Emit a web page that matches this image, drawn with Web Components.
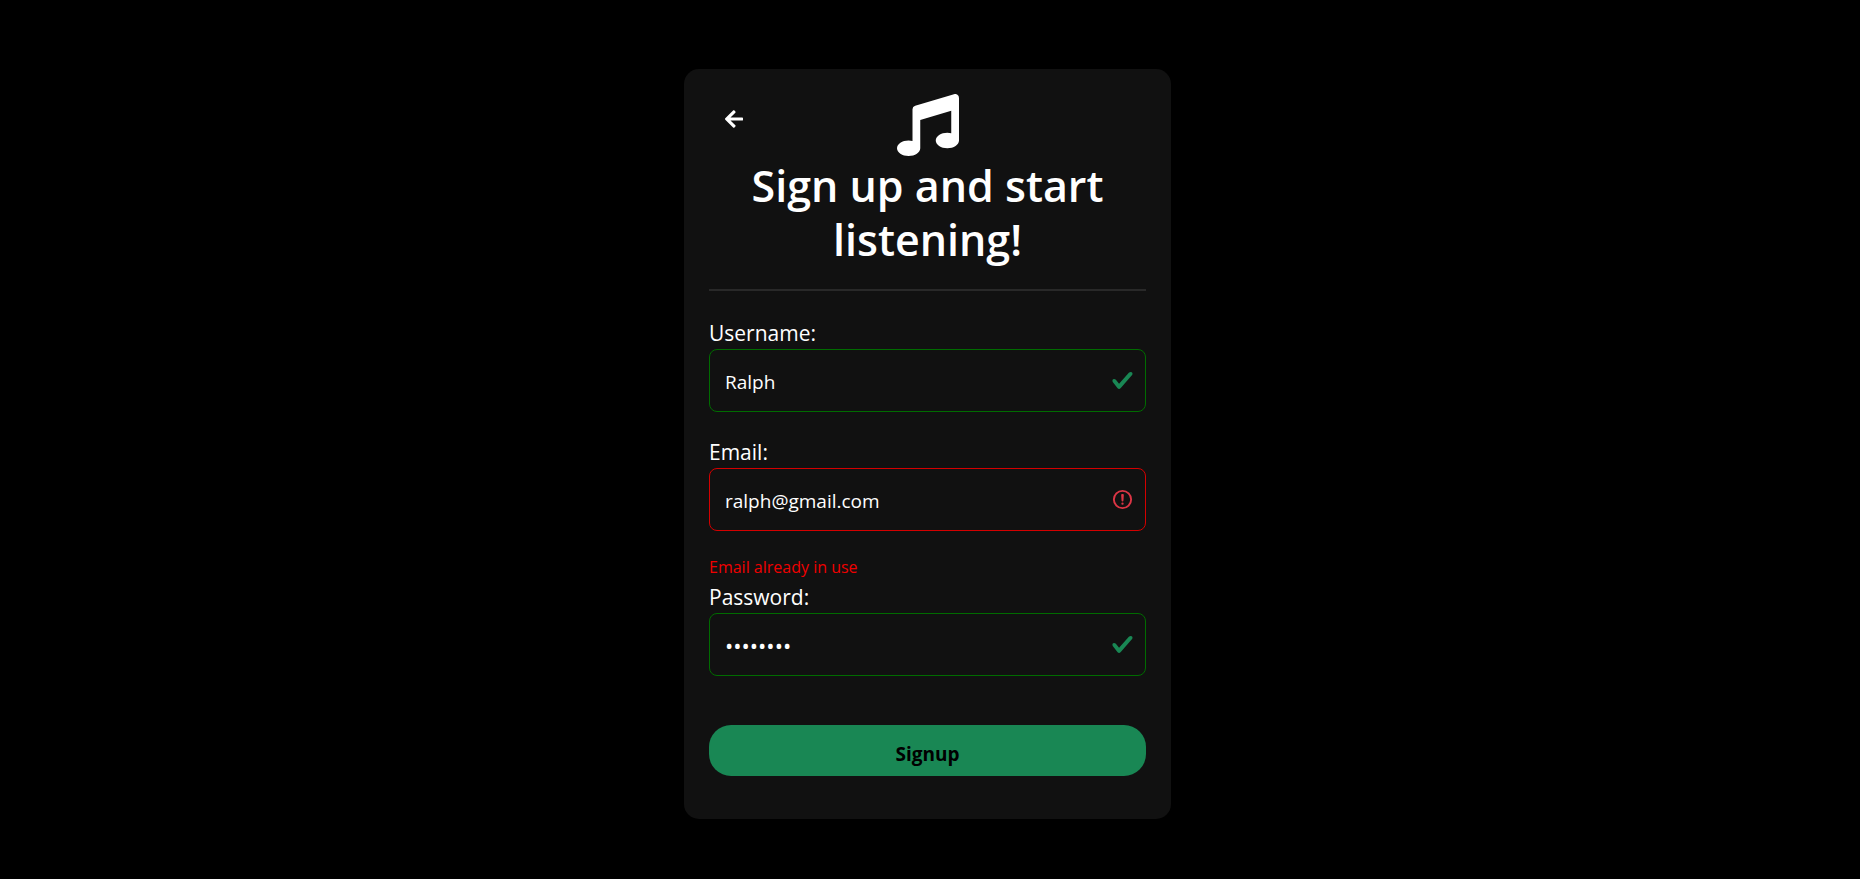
<!DOCTYPE html>
<html lang="en">
<head>
<meta charset="utf-8">
<meta name="viewport" content="width=device-width, initial-scale=1">
<title>Sign up</title>
<style>
  body { margin: 0; background: #000; color: #fff; font-family: "Open Sans", "Noto Sans", sans-serif; }
</style>
</head>
<body>
<signup-page></signup-page>

<script>
const ICONS = {
  valid: '<svg viewBox="0 0 8 8" aria-hidden="true"><path fill="#198754" d="M2.3 6.73.6 4.53c-.4-1.04.46-1.4 1.1-.8l1.1 1.4 3.4-3.8c.6-.63 1.6-.27 1.2.7l-4 4.6c-.43.5-.8.4-1.1.1z"/></svg>',
  invalid: '<svg viewBox="0 0 12 12" fill="none" stroke="#dc3545" aria-hidden="true"><circle cx="6" cy="6" r="4.5"/><path stroke-linejoin="round" d="M5.8 3.6h.4L6 6.5z"/><circle cx="6" cy="8.2" r=".6" fill="#dc3545" stroke="none"/></svg>'
};

class FormHeader extends HTMLElement {
  connectedCallback() {
    this.attachShadow({ mode: 'open' }).innerHTML = `
      <style>
        :host { display: block; border-bottom: 2px solid #292929; padding-bottom: 22px; }
        .top { display: grid; grid-template-columns: 1fr auto 1fr; align-items: start; }
        button { justify-self: start; display: flex; margin: 0; padding: 16px; border: 0; background: none; color: inherit; cursor: pointer; }
        svg { display: block; fill: #fff; }
        .arrow { width: 18px; height: 18px; }
        .note { width: 62px; height: 62px; }
        h1 { margin: 3px 0 0; font-size: 43px; font-weight: 600; line-height: 54px; text-align: center; }
      </style>
      <div class="top">
        <button type="button" aria-label="Back">
          <svg class="arrow" viewBox="0 32 448 448" aria-hidden="true"><path d="M257.5 445.1l-22.2 22.2c-9.4 9.4-24.6 9.4-33.9 0L7 273c-9.4-9.4-9.4-24.6 0-33.9L201.4 44.7c9.4-9.4 24.6-9.4 33.9 0l22.2 22.2c9.5 9.5 9.3 25-.4 34.3L136.6 216H424c13.3 0 24 10.7 24 24v32c0 13.3-10.7 24-24 24H136.6l120.5 114.8c9.8 9.3 10 24.8.4 34.3z"/></svg>
        </button>
        <svg class="note" viewBox="0 0 512 512" aria-hidden="true"><path d="M470.38 1.51L150.41 96A32 32 0 0 0 128 126.51v261.41A139 139 0 0 0 96 384c-53 0-96 28.66-96 64s43 64 96 64 96-28.66 96-64V214.32l256-75v184.61a138.4 138.4 0 0 0-32-3.93c-53 0-96 28.66-96 64s43 64 96 64 96-28.65 96-64V32a32 32 0 0 0-41.62-30.49z"/></svg>
      </div>
      <h1><slot></slot></h1>`;
  }
}

class FormField extends HTMLElement {
  connectedCallback() {
    const { label, type, value, state, error } = this.dataset;
    const bad = state === 'invalid';
    this.attachShadow({ mode: 'open' }).innerHTML = `
      <style>
        :host { display: block; }
        label { display: block; padding-bottom: 2px; font-size: 21px; line-height: 28px; }
        .box { display: grid; align-items: center; }
        input, .box svg { grid-area: 1 / 1; }
        input { box-sizing: border-box; width: 100%; height: 63px; margin: 0; padding: 2px 48px 0 15px;
          border: 1px solid ${bad ? '#d40000' : '#006c00'}; border-radius: 8px; outline: 0;
          background: #111; color: #fff; font: 19px "Open Sans", "Noto Sans", sans-serif; }
        input[type="password"] { padding-top: 0; font-size: 22px; }
        .box svg { justify-self: end; width: 23px; height: 23px; margin-right: 12px; pointer-events: none; }
        p { margin: 22px 0 2px; color: #f00000; font-size: 16px; line-height: 28px; }
      </style>
      <label for="field">${label}</label>
      <div class="box"><input id="field" type="${type}" value="${value}" ${bad ? 'aria-invalid="true" aria-describedby="error"' : ''}>${ICONS[state]}</div>
      ${error ? `<p id="error">${error}</p>` : ''}`;
  }
}

class SubmitButton extends HTMLElement {
  connectedCallback() {
    this.attachShadow({ mode: 'open' }).innerHTML = `
      <style>
        :host { display: block; }
        button { display: block; width: 100%; margin: 0; padding: 15px 0 8px; border: 0; border-radius: 22px;
          background: #198754; color: #000; font: 700 19px/28px "Open Sans", "Noto Sans", sans-serif; cursor: pointer; }
      </style>
      <button type="submit"><slot></slot></button>`;
  }
}

class SignupPage extends HTMLElement {
  connectedCallback() {
    this.attachShadow({ mode: 'open' }).innerHTML = `
      <style>
        :host { display: flex; justify-content: center; padding: 69px 5px 60px 0; }
        main { box-sizing: border-box; width: 100%; max-width: 487px; padding: 25px 25px 43px; border-radius: 15px; background: #111; }
        form { margin: 28px 0 0; }
        .spaced { margin-top: 26px; }
        submit-button { margin-top: 49px; }
      </style>
      <main>
        <form-header>Sign up and start listening!</form-header>
        <form>
          <form-field data-label="Username:" data-type="text" data-value="Ralph" data-state="valid"></form-field>
          <form-field class="spaced" data-label="Email:" data-type="email" data-value="ralph@gmail.com" data-state="invalid" data-error="Email already in use"></form-field>
          <form-field data-label="Password:" data-type="password" data-value="password" data-state="valid"></form-field>
          <submit-button>Signup</submit-button>
        </form>
      </main>`;
  }
}

customElements.define('form-header', FormHeader);
customElements.define('form-field', FormField);
customElements.define('submit-button', SubmitButton);
customElements.define('signup-page', SignupPage);
</script>
</body>
</html>
